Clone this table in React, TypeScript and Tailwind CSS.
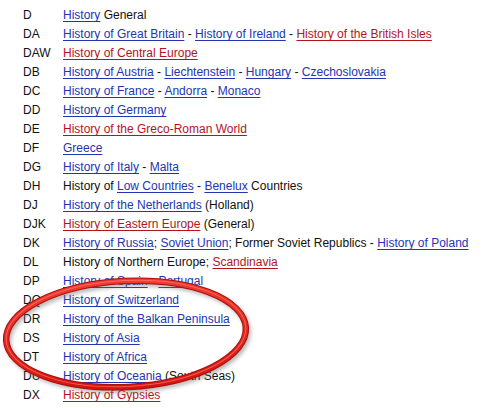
const BLUE = 'text-[#2335b0]';
const RED = 'text-[#b3141c]';

type Part = { t: string; c?: 'b' | 'r' };

const rows: [string, Part[]][] = [
  ['D', [{ t: 'History', c: 'b' }, { t: ' General' }]],
  ['DA', [{ t: 'History of Great Britain', c: 'b' }, { t: ' - ' }, { t: 'History of Ireland', c: 'b' }, { t: ' - ' }, { t: 'History of the British Isles', c: 'r' }]],
  ['DAW', [{ t: 'History of Central Europe', c: 'r' }]],
  ['DB', [{ t: 'History of Austria', c: 'b' }, { t: ' - ' }, { t: 'Liechtenstein', c: 'b' }, { t: ' - ' }, { t: 'Hungary', c: 'b' }, { t: ' - ' }, { t: 'Czechoslovakia', c: 'b' }]],
  ['DC', [{ t: 'History of France', c: 'b' }, { t: ' - ' }, { t: 'Andorra', c: 'b' }, { t: ' - ' }, { t: 'Monaco', c: 'b' }]],
  ['DD', [{ t: 'History of Germany', c: 'b' }]],
  ['DE', [{ t: 'History of the Greco-Roman World', c: 'r' }]],
  ['DF', [{ t: 'Greece', c: 'b' }]],
  ['DG', [{ t: 'History of Italy', c: 'b' }, { t: ' - ' }, { t: 'Malta', c: 'b' }]],
  ['DH', [{ t: 'History of ' }, { t: 'Low Countries', c: 'b' }, { t: ' - ' }, { t: 'Benelux', c: 'b' }, { t: ' Countries' }]],
  ['DJ', [{ t: 'History of the Netherlands', c: 'b' }, { t: ' (Holland)' }]],
  ['DJK', [{ t: 'History of Eastern Europe', c: 'r' }, { t: ' (General)' }]],
  ['DK', [{ t: 'History of Russia', c: 'b' }, { t: '; ' }, { t: 'Soviet Union', c: 'b' }, { t: '; Former Soviet Republics - ' }, { t: 'History of Poland', c: 'b' }]],
  ['DL', [{ t: 'History of Northern Europe; ' }, { t: 'Scandinavia', c: 'r' }]],
  ['DP', [{ t: 'History of Spain', c: 'b' }, { t: ' - ' }, { t: 'Portugal', c: 'b' }]],
  ['DQ', [{ t: 'History of Switzerland', c: 'b' }]],
  ['DR', [{ t: 'History of the Balkan Peninsula', c: 'b' }]],
  ['DS', [{ t: 'History of Asia', c: 'b' }]],
  ['DT', [{ t: 'History of Africa', c: 'b' }]],
  ['DU', [{ t: 'History of Oceania', c: 'b' }, { t: ' (South Seas)' }]],
  ['DX', [{ t: 'History of Gypsies', c: 'r' }]],
];

export default function App() {
  return (
    <div className="relative w-[493px] h-[408px] bg-white overflow-hidden text-[12px] leading-[19px] text-[#111]" style={{ fontFamily: '"Liberation Sans", Arial, sans-serif' }}>
      <div className="pt-[6px]">
        {rows.map(([code, parts]) => (
          <div key={code} className="flex h-[19px] whitespace-nowrap">
            <div className="w-[63px] pl-[23px]">{code}</div>
            <div>
              {parts.map((p, i) =>
                p.c ? (
                  <span key={i} className={`underline underline-offset-[2px] ${p.c === 'b' ? BLUE : RED}`}>{p.t}</span>
                ) : (
                  <span key={i}>{p.t}</span>
                )
              )}
            </div>
          </div>
        ))}
      </div>

      {/* red marker ring drawn over the list */}
      <svg className="absolute left-0 top-0 pointer-events-none" width="493" height="408" viewBox="0 0 493 408">
        <defs>
          <filter id="blur" x="-20%" y="-20%" width="140%" height="140%">
            <feGaussianBlur stdDeviation="2" />
          </filter>
          <linearGradient id="ring" x1="0" y1="0" x2="0" y2="1">
            <stop offset="0" stopColor="#f23a2e" />
            <stop offset="1" stopColor="#d8140f" />
          </linearGradient>
        </defs>
        <g transform="rotate(-3 126 334)">
          <ellipse cx="128" cy="337" rx="120" ry="53" fill="none" stroke="#666" strokeOpacity="0.55" strokeWidth="5" filter="url(#blur)" />
          <ellipse cx="126" cy="334" rx="120" ry="53" fill="none" stroke="#a8100c" strokeWidth="6.5" />
          <ellipse cx="126" cy="334" rx="120" ry="53" fill="none" stroke="url(#ring)" strokeWidth="4.5" />
          <ellipse cx="126" cy="333.5" rx="120" ry="53" fill="none" stroke="#ff8a7e" strokeOpacity="0.6" strokeWidth="1" />
        </g>
      </svg>
    </div>
  );
}
